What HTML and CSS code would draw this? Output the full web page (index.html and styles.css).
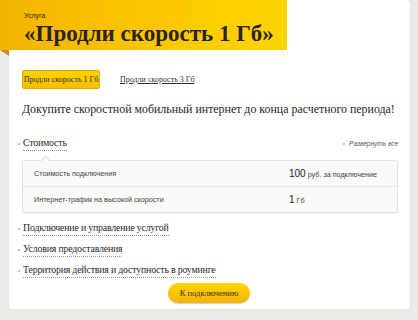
FILE: index.html
```html
<!DOCTYPE html>
<html lang="ru">
<head>
<meta charset="utf-8">
<link rel="stylesheet" href="styles.css">
</head>
<body>
<div class="card">
  <div class="banner">
    <div class="banner-label">Услуга</div>
    <div class="banner-title">«Продли скорость 1 Гб»</div>
  </div>
  <div class="fold"></div>
  <div class="content">
    <div class="tabs">
      <span class="tab active">Продли скорость 1 Гб</span>
      <span class="tab link">Продли скорость 3 Гб</span>
    </div>
    <h1 class="lead">Докупите скоростной мобильный интернет до конца расчетного периода!</h1>
    <div class="section-head">
      <span class="acc"><span class="dot"></span><span class="acc-text">Стоимость</span></span>
      <span class="expand"><span class="dot small"></span>Развернуть все</span>
    </div>
    <div class="table">
      <div class="row">
        <span class="cell-name">Стоимость подключения</span>
        <span class="cell-val"><b>100</b> руб. за подключение</span>
      </div>
      <div class="row">
        <span class="cell-name">Интернет-трафик на высокой скорости</span>
        <span class="cell-val"><b>1</b> Гб</span>
      </div>
    </div>
    <div class="acc-list">
      <span class="acc"><span class="dot"></span><span class="acc-text">Подключение и управление услугой</span></span>
      <span class="acc"><span class="dot"></span><span class="acc-text">Условия предоставления</span></span>
      <span class="acc"><span class="dot"></span><span class="acc-text">Территория действия и доступность в роуминге</span></span>
    </div>
    <div class="actions">
      <span class="btn">К подключению</span>
    </div>
  </div>
</div>
</body>
</html>
```

FILE: styles.css
```css
html, body {
  margin: 0;
  padding: 0;
}
body {
  background: #ebeae5;
  width: 418px;
  height: 320px;
  overflow: hidden;
  font-family: "Liberation Serif", serif;
  color: #333;
}
.card {
  margin: 7px 8px 0 9px;
  height: 309px;
  background: #fff;
  border-radius: 2px;
  box-shadow: 0 0 1px rgba(0,0,0,0.25);
}
.banner {
  margin: -7px 0 0 -9px;
  width: 287px;
  height: 50px;
  box-sizing: border-box;
  padding: 11px 0 0 24px;
  background: linear-gradient(90deg, #f2b400 0%, #fbc500 50%, #ffd500 100%);
  color: #2b2418;
}
.banner-label {
  font-family: "Liberation Sans", sans-serif;
  font-size: 7px;
  line-height: 10px;
}
.banner-title {
  font-weight: bold;
  font-size: 23px;
  line-height: 24px;
  margin-top: 1px;
}
.fold {
  width: 0;
  height: 0;
  margin-left: -9px;
  border-top: 6px solid #c68b1c;
  border-left: 9px solid transparent;
}
.content {
  padding: 0 12px 0 13px;
}
.tabs {
  margin-top: 14px;
  display: flex;
  align-items: center;
  gap: 20px;
  font-size: 8px;
  white-space: nowrap;
  color: #333;
}
.tab.active {
  background: linear-gradient(#fcd200, #f6bd00);
  border: 1px solid #e0a800;
  border-radius: 2px;
  height: 17px;
  line-height: 17px;
  width: 76px;
  text-align: center;
}
.tab.link {
  text-decoration: underline;
}
.lead {
  margin: 12px 0 0 0;
  font-size: 11.9px;
  font-weight: normal;
  line-height: 16px;
  color: #262626;
  white-space: nowrap;
}
.section-head {
  margin-top: 19px;
  display: flex;
  justify-content: space-between;
  align-items: center;
}
.acc {
  display: flex;
  align-items: center;
  font-size: 9.9px;
  letter-spacing: -0.2px;
  line-height: 14px;
  color: #2a2a2a;
}
.dot {
  width: 2px;
  height: 2px;
  background: #c4c4c4;
  margin: 0 3px 0 -4px;
}
.acc-text {
  border-bottom: 1px dotted #999;
}
.expand {
  display: flex;
  align-items: center;
  font-family: "Liberation Sans", sans-serif;
  font-style: italic;
  font-size: 6.5px;
  color: #555;
}
.dot.small {
  width: 2px;
  height: 2px;
  margin: 0 4px 0 0;
}
.table {
  position: relative;
  margin-top: 9px;
  border: 1px solid #e2e2de;
  border-radius: 3px;
  background: #fafaf8;
  font-family: "Liberation Sans", sans-serif;
  font-size: 7.2px;
  color: #444;
  box-shadow: 0 1px 1px rgba(0,0,0,0.05);
}
.table::before {
  content: "";
  position: absolute;
  left: 19px;
  top: -4px;
  width: 6px;
  height: 6px;
  background: #fafaf8;
  border-left: 1px solid #e2e2de;
  border-top: 1px solid #e2e2de;
  transform: rotate(45deg);
}
.row {
  display: flex;
  align-items: center;
  height: 25px;
  padding-left: 11px;
}
.row + .row {
  border-top: 1px solid #e6e6e2;
}
.cell-name {
  width: 255px;
}
.cell-val b {
  font-weight: normal;
  font-size: 10px;
  color: #222;
}
.acc-list {
  margin-top: 8px;
  display: flex;
  flex-direction: column;
  align-items: flex-start;
  gap: 6px;
}
.actions {
  margin-top: 5px;
  display: flex;
  padding-left: 146px;
}
.btn {
  width: 82px;
  height: 20px;
  line-height: 20px;
  text-align: center;
  border-radius: 10px;
  background: linear-gradient(#ffd400, #f5b400);
  box-shadow: 0 1px 1px rgba(0,0,0,0.2);
  font-size: 8.5px;
  color: #333;
}
```
